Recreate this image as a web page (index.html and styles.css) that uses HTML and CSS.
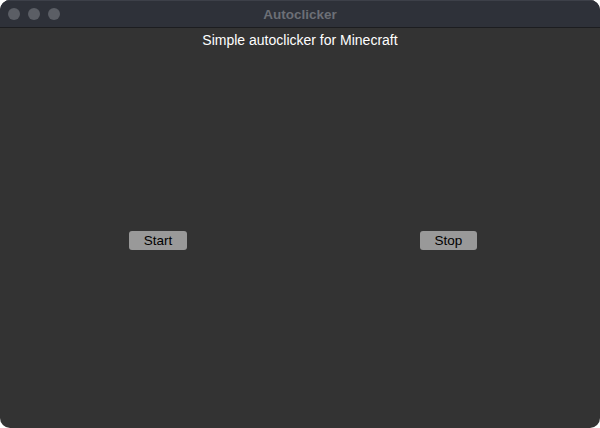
FILE: index.html
```html
<!DOCTYPE html>
<html>
<head>
<meta charset="utf-8">
<link rel="stylesheet" href="styles.css">
</head>
<body>
<div class="window">
  <div class="titlebar">
    <div class="lights">
      <span class="light"></span>
      <span class="light"></span>
      <span class="light"></span>
    </div>
    <div class="title">Autoclicker</div>
  </div>
  <div class="content">
    <div class="label">Simple autoclicker for Minecraft</div>
    <div class="buttons">
      <button class="btn start">Start</button>
      <button class="btn stop">Stop</button>
    </div>
  </div>
</div>
</body>
</html>
```
FILE: styles.css
```css
html, body {
  margin: 0;
  padding: 0;
  background: #ffffff;
}
.window {
  width: 600px;
  height: 428px;
  border-radius: 10px;
  overflow: hidden;
  background: #333333;
  display: flex;
  flex-direction: column;
  font-family: "Liberation Sans", Arial, sans-serif;
}
.titlebar {
  background: #2e3139;
  border-top: 1px solid #3d4049;
  border-bottom: 1px solid #1c1d20;
  box-sizing: border-box;
  height: 28px;
  display: flex;
  align-items: center;
  position: relative;
}
.lights {
  display: flex;
  gap: 8px;
  padding-left: 8px;
}
.light {
  width: 12px;
  height: 12px;
  border-radius: 50%;
  background: #5b5e65;
}
.title {
  position: absolute;
  left: 0;
  right: 0;
  text-align: center;
  color: #6c6f76;
  font-weight: bold;
  font-size: 13.5px;
}
.content {
  flex: 1;
  display: flex;
  flex-direction: column;
}
.label {
  margin-top: 4px;
  text-align: center;
  color: #ffffff;
  font-size: 14px;
  line-height: 16px;
}
.buttons {
  display: flex;
  margin-top: 183px;
  padding-left: 129px;
  gap: 233px;
}
.btn {
  height: 19px;
  width: 58px;
  padding: 0;
  border: none;
  border-radius: 3px;
  background: #999999;
  color: #000000;
  font-family: "Liberation Sans", Arial, sans-serif;
  font-size: 13.5px;
  line-height: 19px;
}
.btn.stop {
  width: 57px;
}
```
